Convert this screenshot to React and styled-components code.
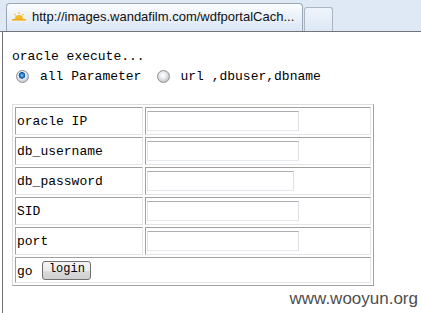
import styled, { createGlobalStyle } from 'styled-components';

const Global = createGlobalStyle`
    html, body { margin: 0; padding: 0; background: #fff; }
    body { overflow: hidden; }
`;

const Window = styled.div`
    position: relative;
    width: 421px;
    height: 313px;
    display: flex;
    flex-direction: column;
    background: #fff;
`;

const TabBar = styled.div`
    height: 31px;
    display: flex;
    align-items: flex-end;
    padding-left: 6px;
    background: #dfe9f5;
    border-bottom: 1px solid #747474;
`;

const Tab = styled.div`
    width: 297px;
    height: 28px;
    box-sizing: border-box;
    display: flex;
    align-items: center;
    gap: 6px;
    padding: 0 0 2px 5px;
    border: 1px solid #98a6b6;
    border-bottom: none;
    border-radius: 4px 4px 0 0;
    background: linear-gradient(#fbfdff, #e6eef9 60%, #dbe7f6);
    font: 13px "Liberation Sans", Arial, sans-serif;
    color: #111;
    white-space: nowrap;
    overflow: hidden;
`;

const NewTab = styled.div`
    width: 29px;
    height: 24px;
    box-sizing: border-box;
    margin-left: 1px;
    border: 1px solid #a9b5c3;
    border-bottom: none;
    border-radius: 3px 3px 0 0;
    background: linear-gradient(#eef4fb, #dde8f5);
`;

const Page = styled.div`
    flex: 1;
    margin-left: 2px;
    border-left: 1px solid #707070;
    padding: 17px 0 0 9px;
    font: 13px/15px "Liberation Mono", "DejaVu Sans Mono", monospace;
    color: #000;
`;

const Heading = styled.div`
    height: 15px;
`;

const Options = styled.div`
    display: flex;
    align-items: center;
    height: 20px;
    margin-top: 2px;
`;

const Radio = styled.span`
    width: 13px;
    height: 13px;
    box-sizing: border-box;
    border-radius: 50%;
    margin: 0 ${p => p.$gap}px 0 ${p => p.$lead}px;
    border: 1px solid #8f9193;
    background: ${p => p.$on
        ? 'radial-gradient(circle at 45% 40%, #9fd3ff 0, #2d87d8 1.6px, #0b4f9c 3px, #e9eef3 3.6px, #c9ced4 6px)'
        : 'radial-gradient(circle at 45% 40%, #ffffff 0, #eceef0 3px, #c8cbcf 6px)'};
`;

const Grid = styled.table`
    margin-top: 18px;
    width: 362px;
    border-collapse: separate;
    border-spacing: 2px;
    border: 1px solid;
    border-color: #dcdcdc #a0a0a0 #a0a0a0 #dcdcdc;
`;

const Cell = styled.td`
    height: 26px;
    padding: 0 1px;
    border: 1px solid;
    border-color: #a0a0a0 #e4e4e4 #e4e4e4 #a0a0a0;
    vertical-align: middle;
    width: ${p => p.$w || 'auto'};
    ${p => p.$short && 'height: 24px;'}
`;

const Field = styled.input`
    display: block;
    width: ${p => p.$w}px;
    height: 20px;
    box-sizing: border-box;
    margin: 0;
    border: 1px solid;
    border-color: #abadb3 #dbdfe6 #e3e9ef #e2e3ea;
    background: #fff;
    outline: none;
`;

const Button = styled.button`
    width: 49px;
    height: 19px;
    margin: 0 0 0 2px;
    padding: 0 0 2px;
    border: 1px solid #707070;
    border-radius: 3px;
    background: linear-gradient(#f4f4f4, #ebebeb 50%, #dbdbdb 51%, #cfcfcf);
    font: 12px "Liberation Mono", monospace;
    color: #000;
    vertical-align: 2px;
`;

const Watermark = styled.div`
    position: absolute;
    right: 3px;
    bottom: 4px;
    font: 17px "Liberation Sans", Arial, sans-serif;
    color: #4f4f4f;
`;

const Favicon = () => (
    <svg width="14" height="10" viewBox="0 0 14 10">
        <path d="M3 7 A4 4 0 0 1 11 7 Z" fill="#f6b81f" />
        <rect x="0" y="7" width="14" height="1.5" fill="#f1a90c" />
        <path d="M7 0v2M2.5 2l1.3 1.3M11.5 2l-1.3 1.3" stroke="#f6c53a" strokeWidth="1.2" />
    </svg>
);

const rows = [
    { label: 'oracle IP', w: 152 },
    { label: 'db_username', w: 152 },
    { label: 'db_password', w: 147, type: 'password' },
    { label: 'SID', w: 152 },
    { label: 'port', w: 152 },
];

export default function App() {
    return (
        <Window>
            <Global />
            <TabBar>
                <Tab><Favicon />http://images.wandafilm.com/wdfportalCach...</Tab>
                <NewTab />
            </TabBar>
            <Page>
                <Heading>oracle execute...</Heading>
                <Options>
                    <Radio $on $lead={4} $gap={11} />all Parameter
                    <Radio $lead={16} $gap={10} />url ,dbuser,dbname
                </Options>
                <Grid>
                    <tbody>
                        {rows.map(r => (
                            <tr key={r.label}>
                                <Cell $w="124px">{r.label}</Cell>
                                <Cell><Field type={r.type || 'text'} $w={r.w} /></Cell>
                            </tr>
                        ))}
                        <tr>
                            <Cell colSpan={2} $short>go <Button>login</Button></Cell>
                        </tr>
                    </tbody>
                </Grid>
            </Page>
            <Watermark>www.wooyun.org</Watermark>
        </Window>
    );
}
